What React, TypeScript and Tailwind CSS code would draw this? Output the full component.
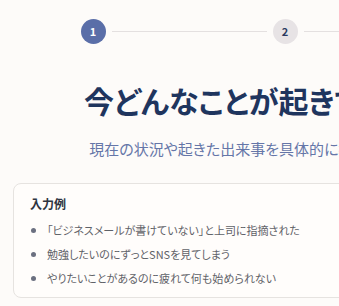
import React from 'react';

const examples = [
  '「ビジネスメールが書けていない」と上司に指摘された',
  '勉強したいのにずっとSNSを見てしまう',
  'やりたいことがあるのに疲れて何も始められない',
];

function Step({ n, active }: { n: number; active?: boolean }) {
  return (
    <div
      className={
        active
          ? 'w-[25px] h-[25px] rounded-full bg-[#5a6ea8] text-white flex items-center justify-center text-[11px] font-semibold'
          : 'w-[25px] h-[25px] rounded-full bg-[#e7e3e5] text-[#2a3a60] flex items-center justify-center text-[11px] font-semibold'
      }
    >
      {n}
    </div>
  );
}

export default function App() {
  return (
    <div
      className="w-[339px] h-[306px] overflow-hidden bg-[#fdfbf9] [font-feature-settings:'palt']"
      style={{ fontFamily: '"Noto Sans CJK JP", "Noto Sans", sans-serif' }}
    >
      <div className="w-[570px] px-[13px]">
        {/* stepper */}
        <div className="flex items-center justify-center pt-[19px]">
          <Step n={1} active />
          <div className="w-[155px] h-px bg-[#e4e0e0] mx-[6px]" />
          <Step n={2} />
          <div className="w-[155px] h-px bg-[#e4e0e0] mx-[6px]" />
          <Step n={3} />
        </div>

        <h1 className="mt-[38px] pr-[12px] text-center text-[30px] leading-[37px] font-bold text-[#1f355e]">
          今どんなことが起きていますか
        </h1>
        <p className="mt-[18px] pr-[48px] text-center text-[15px] leading-[24px] text-[#6576a8]">
          現在の状況や起きた出来事を具体的に教えてください
        </p>

        <div className="mt-[22px] rounded-lg border border-[#e6e3e0] bg-[#fffdfb] px-[16px] pt-[10px] pb-[7px]">
          <p className="text-[12px] leading-[20px] font-bold text-[#2e3440]">入力例</p>
          <ul className="mt-[4px]">
            {examples.map((t) => (
              <li key={t} className="flex items-center h-[24px] text-[11px] text-[#5f6268]">
                <span className="w-[5px] h-[5px] rounded-full bg-[#6b7080] ml-[1px] mr-[11px]" />
                {t}
              </li>
            ))}
          </ul>
        </div>
      </div>
    </div>
  );
}
